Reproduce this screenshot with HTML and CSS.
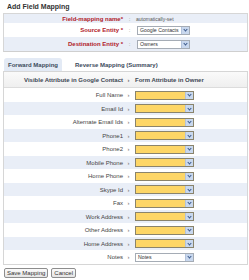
FILE: index.html
```html
<!DOCTYPE html>
<html>
<head>
<meta charset="utf-8">
<link rel="stylesheet" href="styles.css">
</head>
<body>
<div class="page">
  <div class="title">Add Field Mapping</div>
  <div class="topbox">
    <div class="trow alt r1">
      <div class="tlabel">Field-mapping name*</div>
      <div class="tsep">:</div>
      <div class="tval auto">automatically-set</div>
    </div>
    <div class="trow r2">
      <div class="tlabel">Source Entity *</div>
      <div class="tsep">:</div>
      <div class="tval"><div class="sel white w52"><span class="txt">Google Contacts</span><span class="arr"></span></div></div>
    </div>
    <div class="trow alt r3">
      <div class="tlabel">Destination Entity *</div>
      <div class="tsep">:</div>
      <div class="tval"><div class="sel white w52"><span class="txt">Owners</span><span class="arr"></span></div></div>
    </div>
  </div>
  <div class="tabs">
    <div class="tab active">Forward Mapping</div>
    <div class="tab">Reverse Mapping (Summary)</div>
  </div>
  <div class="mapbox">
    <div class="mrow head">
      <div class="mlabel">Visible Attribute in Google Contact</div>
      <div class="msep">›</div>
      <div class="mval">Form Attribute in Owner</div>
    </div>
    <div class="mrow h14"><div class="mlabel">Full Name</div><div class="msep">›</div><div class="mval"><div class="sel yellow"><span class="arr"></span></div></div></div>
    <div class="mrow alt h13"><div class="mlabel">Email Id</div><div class="msep">›</div><div class="mval"><div class="sel yellow"><span class="arr"></span></div></div></div>
    <div class="mrow h14"><div class="mlabel">Alternate Email Ids</div><div class="msep">›</div><div class="mval"><div class="sel yellow"><span class="arr"></span></div></div></div>
    <div class="mrow alt h13"><div class="mlabel">Phone1</div><div class="msep">›</div><div class="mval"><div class="sel yellow"><span class="arr"></span></div></div></div>
    <div class="mrow h14"><div class="mlabel">Phone2</div><div class="msep">›</div><div class="mval"><div class="sel yellow"><span class="arr"></span></div></div></div>
    <div class="mrow alt h13"><div class="mlabel">Mobile Phone</div><div class="msep">›</div><div class="mval"><div class="sel yellow"><span class="arr"></span></div></div></div>
    <div class="mrow h14"><div class="mlabel">Home Phone</div><div class="msep">›</div><div class="mval"><div class="sel yellow"><span class="arr"></span></div></div></div>
    <div class="mrow alt h13"><div class="mlabel">Skype Id</div><div class="msep">›</div><div class="mval"><div class="sel yellow"><span class="arr"></span></div></div></div>
    <div class="mrow h14"><div class="mlabel">Fax</div><div class="msep">›</div><div class="mval"><div class="sel yellow"><span class="arr"></span></div></div></div>
    <div class="mrow alt h13"><div class="mlabel">Work Address</div><div class="msep">›</div><div class="mval"><div class="sel yellow"><span class="arr"></span></div></div></div>
    <div class="mrow h14"><div class="mlabel">Other Address</div><div class="msep">›</div><div class="mval"><div class="sel yellow"><span class="arr"></span></div></div></div>
    <div class="mrow alt h13"><div class="mlabel">Home Address</div><div class="msep">›</div><div class="mval"><div class="sel yellow"><span class="arr"></span></div></div></div>
    <div class="mrow h14"><div class="mlabel">Notes</div><div class="msep">›</div><div class="mval"><div class="sel white"><span class="txt">Notes</span><span class="arr"></span></div></div></div>
  </div>
  <div class="buttons">
    <button class="btn">Save Mapping</button>
    <button class="btn">Cancel</button>
  </div>
</div>
</body>
</html>
```
FILE: styles.css
```css
html, body {
  margin: 0;
  padding: 0;
  background: #fff;
}
body {
  font-family: "Liberation Sans", Arial, sans-serif;
  font-size: 6px;
  color: #444;
}
.page {
  padding: 0 1px 0 3px;
}
.title {
  font-weight: bold;
  font-size: 7px;
  color: #333;
  padding: 2px 0 0 4px;
  height: 11px;
  line-height: 9px;
}
.topbox {
  border: 1px solid #d6d6d6;
  border-bottom-color: #cfcfcf;
}
.trow {
  display: flex;
  align-items: center;
}
.trow.alt {
  background: #e9eef7;
}
.r1 { height: 9px; }
.r2 { height: 14px; }
.r3 { height: 14px; }
.tlabel {
  width: 119px;
  text-align: right;
  font-weight: bold;
  color: #b0202a;
  font-size: 6px;
}
.tsep {
  width: 13px;
  text-align: center;
  color: #888;
}
.tval {
  flex: 1;
}
.auto {
  font-size: 5px;
  color: #555;
}
.tabs {
  display: flex;
  margin-top: 6px;
  height: 13px;
  align-items: stretch;
}
.tab {
  font-weight: bold;
  color: #3c4a5c;
  padding: 0 4px;
  display: flex;
  align-items: center;
  border-radius: 3px 3px 0 0;
  margin-right: 9px;
}
.tab.active {
  background: #e3eaf5;
  margin-left: 1px;
}
.mapbox {
  border: 1px solid #d6d6d6;
}
.mrow {
  display: flex;
  align-items: center;
}
.mrow.head {
  height: 15px;
  font-weight: bold;
  color: #3c4653;
  background: linear-gradient(#fafafa, #efefef);
  border-bottom: 1px solid #dcdcdc;
}
.mrow.alt {
  background: #e9eef7;
}
.h14 { height: 14px; }
.h13 { height: 13px; }
.mlabel {
  width: 119px;
  text-align: right;
  white-space: nowrap;
}
.msep {
  width: 11px;
  text-align: center;
  color: #666;
}
.mval {
  flex: 1;
  white-space: nowrap;
}
.mrow.head .mval {
  padding-left: 1px;
}
.sel {
  display: flex;
  align-items: stretch;
  width: 59px;
  height: 9px;
  box-sizing: border-box;
  border: 1px solid #8c8c8c;
  margin-left: 1px;
}
.sel.w52 { width: 53px; }
.sel.yellow {
  background: #fdd667;
  border-color: #8a846c;
}
.sel.white {
  background: #fff;
  border-color: #a5acb5;
}
.sel .txt {
  flex: 1;
  min-width: 0;
  overflow: hidden;
  white-space: nowrap;
  font-size: 5.2px;
  line-height: 7px;
  padding-left: 2px;
  color: #333;
}
.sel.yellow .arr { margin-left: auto; }
.arr {
  flex: none;
  width: 7px;
  background: #c9d8ee;
  border-left: 1px solid #b3c3dc;
  position: relative;
}
.arr::after {
  content: "";
  position: absolute;
  left: 2px;
  top: 1.5px;
  width: 2px;
  height: 2px;
  border-right: 1px solid #3b5a8c;
  border-bottom: 1px solid #3b5a8c;
  transform: rotate(45deg);
}
.buttons {
  display: flex;
  gap: 3px;
  padding: 3px 0 0 1px;
}
.btn {
  font-family: "Liberation Sans", Arial, sans-serif;
  font-size: 6px;
  color: #333;
  height: 10px;
  padding: 0 2px;
  line-height: 8px;
  border: 1px solid #8d8d8d;
  border-radius: 2px;
  background: linear-gradient(#fbfbfb, #e4e4e4);
}
```
